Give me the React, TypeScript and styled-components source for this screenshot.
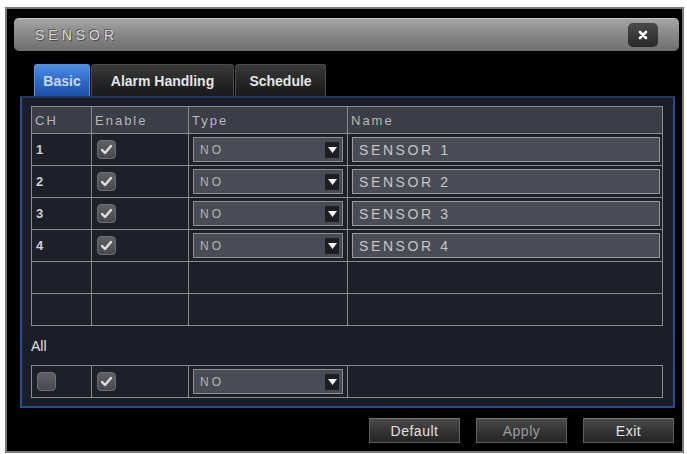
import styled, { createGlobalStyle } from 'styled-components'

const GlobalStyle = createGlobalStyle`
  html, body {
    margin: 0;
    padding: 0;
    background: #fff;
  }
  body {
    font-family: "Liberation Sans", Arial, sans-serif;
  }
`

const Page = styled.div`
  padding: 7px 0 0 5px;
`

const Window = styled.div`
  width: 668px;
  height: 433px;
  border: 2px solid #7a7a7a;
  background: #000;
  display: flex;
  flex-direction: column;
  padding: 9px 0 0 7px;
`

const TitleBar = styled.div`
  height: 33px;
  margin-right: 3px;
  border-radius: 5px;
  background: linear-gradient(#a4a4a4 0%, #8a8a8a 45%, #6e6e6e 100%);
  border-top: 1px solid #c4c4c4;
  box-sizing: border-box;
  display: flex;
  align-items: center;
  justify-content: space-between;
  padding: 0 21px 0 21px;
`

const Title = styled.span`
  font-size: 14px;
  letter-spacing: 4px;
  color: #d8d8d8;
  text-shadow: -1px -1px 0 #5a5a5a, 1px 1px 0 #505050;
`

const CloseButton = styled.div`
  width: 30px;
  height: 24px;
  border-radius: 5px;
  background: linear-gradient(#4a4a4a, #2a2a2a);
  display: flex;
  align-items: center;
  justify-content: center;
`

const Tabs = styled.div`
  display: flex;
  margin: 13px 0 0 20px;
  height: 32px;
`

const Tab = styled.div<{ $active?: boolean; $width: number }>`
  width: ${p => p.$width}px;
  margin-right: 1px;
  box-sizing: border-box;
  display: flex;
  align-items: center;
  justify-content: center;
  font-size: 14px;
  font-weight: bold;
  color: ${p => (p.$active ? '#cdd8ee' : '#e4e4e4')};
  border-radius: 3px 3px 0 0;
  background: ${p =>
    p.$active
      ? 'linear-gradient(#4d8ee8 0%, #2e6cc8 50%, #1c4ea6 100%)'
      : 'linear-gradient(#3a3a3a 0%, #242424 60%, #1a1a1a 100%)'};
  border: 1px solid ${p => (p.$active ? '#5a8fe0' : '#4a4a4a')};
  border-bottom: none;
`

const Panel = styled.div`
  margin: 0 7px 0 6px;
  height: 312px;
  box-sizing: border-box;
  border: 2px solid #2d4b93;
  border-top-color: #23345e;
  background: #1b1d28;
  padding: 8px 8px 0 9px;
`

const Grid = styled.div`
  display: grid;
  grid-template-columns: 59px 96px 158px 314px;
  width: 632px;
  background: #8a8a8a;
  gap: 1px;
  padding: 1px;
  box-sizing: border-box;
`

const HeadCell = styled.div`
  height: 26px;
  background: #3b3d47;
  color: #b8b8b8;
  font-size: 13px;
  letter-spacing: 2px;
  display: flex;
  align-items: center;
  padding-left: 3px;
`

const Cell = styled.div`
  height: 31px;
  background: #1e2029;
  color: #d0d0d0;
  font-size: 13px;
  font-weight: bold;
  display: flex;
  align-items: center;
  padding-left: 4px;
`

const Check = styled.div`
  width: 19px;
  height: 19px;
  box-sizing: border-box;
  border-radius: 4px;
  border: 1px solid #707070;
  background: linear-gradient(#606066, #48494f);
  display: flex;
  align-items: center;
  justify-content: center;
  margin-left: 1px;
`

const Select = styled.div`
  width: 150px;
  height: 25px;
  box-sizing: border-box;
  border: 1px solid #8e8e8e;
  background: #4a4c55;
  display: flex;
  align-items: center;
  justify-content: space-between;
  padding: 0 3px 0 6px;
  color: #b4b4b4;
  font-size: 12px;
  font-weight: normal;
  letter-spacing: 3px;
`

const Arrow = styled.div`
  width: 14px;
  height: 16px;
  background: #1e1e22;
  display: flex;
  align-items: center;
  justify-content: center;
`

const NameInput = styled.div`
  width: 308px;
  height: 25px;
  box-sizing: border-box;
  border: 1px solid #9a9a9a;
  background: #4a4c55;
  display: flex;
  align-items: center;
  padding-left: 6px;
  color: #c6c6c6;
  font-size: 14px;
  font-weight: normal;
  letter-spacing: 2.6px;
`

const AllLabel = styled.div`
  color: #e0e0e0;
  font-size: 14px;
  height: 39px;
  display: flex;
  align-items: center;
`

const Footer = styled.div`
  display: flex;
  justify-content: flex-end;
  gap: 16px;
  margin: 10px 8px 0 0;
`

const Button = styled.div<{ $dim?: boolean }>`
  width: 91px;
  height: 25px;
  box-sizing: border-box;
  border: 1px solid #5e5e5e;
  border-top-color: #777;
  background: linear-gradient(#4a4a4a 0%, #333 55%, #262626 100%);
  color: ${p => (p.$dim ? '#9c9c9c' : '#e2e2e2')};
  font-size: 14px;
  letter-spacing: 0.5px;
  display: flex;
  align-items: center;
  justify-content: center;
`

const CheckMark = () => (
  <svg width="13" height="11" viewBox="0 0 13 11">
    <polyline points="2,6 5,9 11,2" fill="none" stroke="#e0e0e0" strokeWidth="2.4" strokeLinecap="round" strokeLinejoin="round" />
  </svg>
)

const DownArrow = () => (
  <svg width="9" height="6" viewBox="0 0 9 6">
    <polygon points="0,0 9,0 4.5,6" fill="#fff" />
  </svg>
)

const TypeSelect = () => (
  <Select>
    NO
    <Arrow><DownArrow /></Arrow>
  </Select>
)

const sensors = [1, 2, 3, 4]

export default function App() {
  return (
    <>
      <GlobalStyle />
      <Page>
        <Window>
          <TitleBar>
            <Title>SENSOR</Title>
            <CloseButton>
              <svg width="10" height="10" viewBox="0 0 10 10">
                <path d="M2 2 L8 8 M8 2 L2 8" stroke="#fff" strokeWidth="2.6" strokeLinecap="round" />
              </svg>
            </CloseButton>
          </TitleBar>

          <Tabs>
            <Tab $active $width={56}>Basic</Tab>
            <Tab $width={143}>Alarm Handling</Tab>
            <Tab $width={91}>Schedule</Tab>
          </Tabs>

          <Panel>
            <Grid>
              <HeadCell>CH</HeadCell>
              <HeadCell>Enable</HeadCell>
              <HeadCell>Type</HeadCell>
              <HeadCell>Name</HeadCell>
              {sensors.map(n => [
                <Cell key={`ch${n}`}>{n}</Cell>,
                <Cell key={`en${n}`}>
                  <Check><CheckMark /></Check>
                </Cell>,
                <Cell key={`ty${n}`}>
                  <TypeSelect />
                </Cell>,
                <Cell key={`nm${n}`}>
                  <NameInput>SENSOR {n}</NameInput>
                </Cell>,
              ])}
              {[0, 1].map(r =>
                [0, 1, 2, 3].map(c => <Cell key={`empty${r}-${c}`} />)
              )}
            </Grid>

            <AllLabel>All</AllLabel>
            <Grid>
              <Cell>
                <Check />
              </Cell>
              <Cell>
                <Check><CheckMark /></Check>
              </Cell>
              <Cell>
                <TypeSelect />
              </Cell>
              <Cell />
            </Grid>
          </Panel>

          <Footer>
            <Button>Default</Button>
            <Button $dim>Apply</Button>
            <Button>Exit</Button>
          </Footer>
        </Window>
      </Page>
    </>
  )
}
